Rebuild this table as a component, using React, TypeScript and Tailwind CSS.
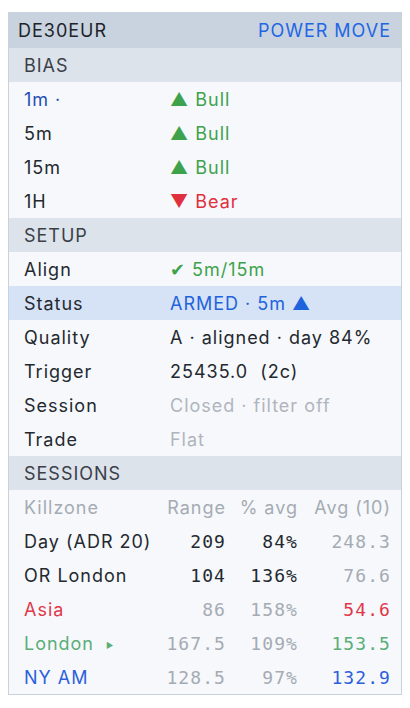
import React from "react";

const SANS = "font-['Inter','Noto_Sans',sans-serif] tracking-[0.055em]";
const MONO = "font-['DejaVu_Sans_Mono','Liberation_Mono',monospace] tracking-[0.06em]";

type KV = { label: React.ReactNode; value: React.ReactNode; highlight?: boolean };

const BIAS: KV[] = [
  { label: <span className="text-[#1f4fb5]">1m ·</span>, value: <span className="text-[#3ea24c]">▲ Bull</span> },
  { label: "5m", value: <span className="text-[#3ea24c]">▲ Bull</span> },
  { label: "15m", value: <span className="text-[#3ea24c]">▲ Bull</span> },
  { label: "1H", value: <span className="text-[#e0303e]">▼ Bear</span> },
];

const SETUP: KV[] = [
  { label: "Align", value: <span className="text-[#3ea24c]">✔ 5m/15m</span> },
  { label: "Status", value: <span className="text-[#1f63dc]">ARMED · 5m ▲</span>, highlight: true },
  { label: "Quality", value: "A · aligned · day 84%" },
  { label: "Trigger", value: <span className="whitespace-pre">25435.0  (2c)</span> },
  { label: "Session", value: <span className="text-[#b0b5bd]">Closed · filter off</span> },
  { label: "Trade", value: <span className="text-[#b0b5bd]">Flat</span> },
];

const SESSIONS = [
  { name: "Day (ADR 20)", range: "209", pct: "84%", avg: "248.3", nameCls: "text-[#24292f]", numCls: "text-[#24292f]", avgCls: "text-[#a5abb3]" },
  { name: "OR London", range: "104", pct: "136%", avg: "76.6", nameCls: "text-[#24292f]", numCls: "text-[#24292f]", avgCls: "text-[#a5abb3]" },
  { name: "Asia", range: "86", pct: "158%", avg: "54.6", nameCls: "text-[#e0384a]", numCls: "text-[#a5abb3]", avgCls: "text-[#e0384a]" },
  { name: "London", range: "167.5", pct: "109%", avg: "153.5", nameCls: "text-[#5aae78]", numCls: "text-[#a5abb3]", avgCls: "text-[#5aae78]", live: true },
  { name: "NY AM", range: "128.5", pct: "97%", avg: "132.9", nameCls: "text-[#2d5fdc]", numCls: "text-[#a5abb3]", avgCls: "text-[#2d5fdc]" },
];

function Section({ title }: { title: string }) {
  return (
    <div className="h-[34px] flex items-center px-[15px] bg-[#dde3eb] text-[#3a4048]">{title}</div>
  );
}

function Row({ label, value, highlight }: KV) {
  return (
    <div className={`h-[34px] flex items-center px-[15px] ${highlight ? "bg-[#d6e2f6]" : ""}`}>
      <div className="w-[146px] shrink-0">{label}</div>
      <div className="whitespace-nowrap">{value}</div>
    </div>
  );
}

export default function App() {
  return (
    <div className={`min-h-[708px] bg-white pt-[12px] pl-[8px] ${SANS} text-[18px] text-[#24292f]`}>
      <div className="w-[394px] border border-[#c9d1dc] bg-[#f6f8fb]">
        <div className="h-[35px] flex items-center justify-between pl-[9px] pr-[10px] bg-[#c9d3df]">
          <span className="text-[#1e232a]">DE30EUR</span>
          <span className="text-[#2266e3]">POWER MOVE</span>
        </div>
        <Section title="BIAS" />
        {BIAS.map((r, i) => (
          <Row key={i} {...r} />
        ))}
        <Section title="SETUP" />
        {SETUP.map((r, i) => (
          <Row key={i} {...r} />
        ))}
        <Section title="SESSIONS" />
        <div className="h-[34px] flex items-center pl-[15px] pr-[10px] text-[#a5abb3] whitespace-nowrap">
          <div className="flex-1 min-w-0">Killzone</div>
          <div className="w-[70px] text-right">Range</div>
          <div className="w-[72px] text-right">% avg</div>
          <div className="w-[93px] text-right">Avg (10)</div>
        </div>
        {SESSIONS.map((s) => (
          <div key={s.name} className="h-[34px] flex items-center pl-[15px] pr-[10px] whitespace-nowrap">
            <div className={`flex-1 min-w-0 ${s.nameCls}`}>
              {s.name}
              {s.live && <span className="ml-[12px] text-[8px] text-[#5aae78] align-middle">▶</span>}
            </div>
            <div className={`w-[70px] text-right ${MONO} ${s.numCls}`}>{s.range}</div>
            <div className={`w-[72px] text-right ${MONO} ${s.numCls}`}>{s.pct}</div>
            <div className={`w-[93px] text-right ${MONO} ${s.avgCls}`}>{s.avg}</div>
          </div>
        ))}
      </div>
    </div>
  );
}
